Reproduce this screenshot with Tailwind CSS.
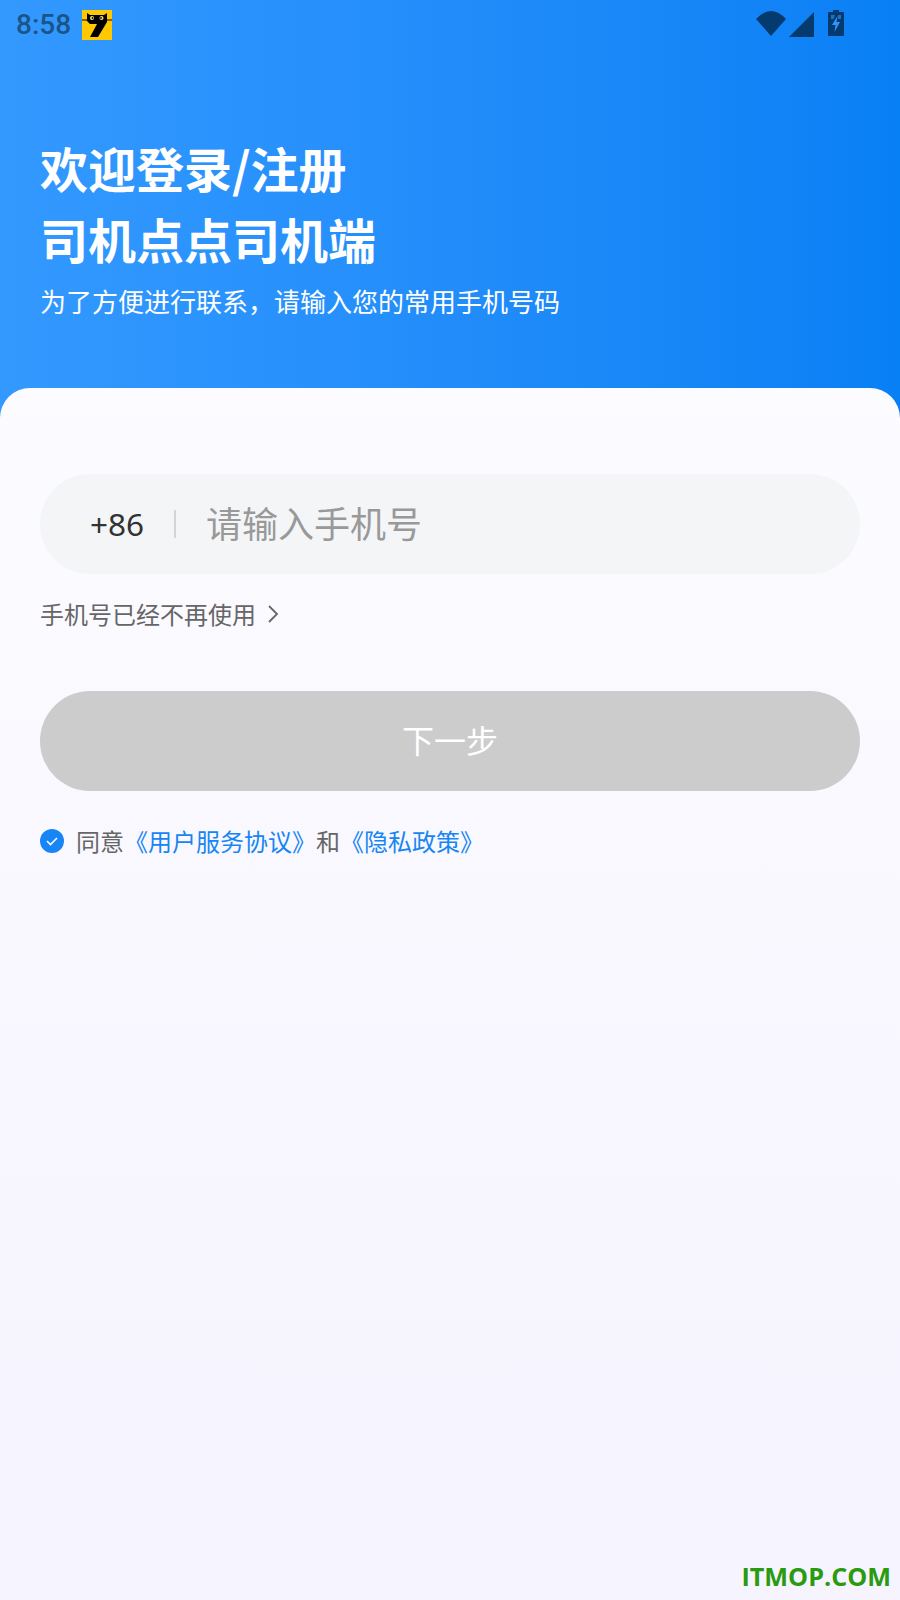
<!DOCTYPE html>
<html lang="zh-CN">

<head>
    <meta charset="UTF-8">
    <meta name="viewport" content="width=device-width, initial-scale=1.0">
    <title>司机点点司机端</title>
    <script src="https://cdn.jsdelivr.net/npm/@tailwindcss/browser@4"></script>
</head>

<body>
    <section class="relative w-[900px] h-[1600px] overflow-hidden flex flex-col bg-[#f5f4ff] font-['Noto_Sans_CJK_SC','Noto_Sans',sans-serif]">
        <!-- header -->
        <div class="h-[418px] shrink-0 bg-gradient-to-r from-[#3399ff] to-[#0880f5]">
            <div class="h-[50px] flex items-center pl-4 pr-[56px] text-[#1a5488]">
                <span class="font-['Roboto',sans-serif] font-medium text-[28px] leading-none">8:58</span>
                <svg class="ml-[11px] w-[30px] h-[30px]" viewBox="0 0 30 30">
                    <rect width="30" height="30" fill="#ffc800" />
                    <path d="M0 10 H30" stroke="#000" stroke-width="1" />
                    <path d="M5 3 L8 5 H22 L25 3 V12 L16 27 H8 L15 14 H8 L5 11 Z" fill="#000" />
                    <circle cx="10" cy="8" r="2" fill="#ffe680" />
                    <circle cx="19.5" cy="8" r="2" fill="#ffe680" />
                    <circle cx="10.5" cy="8" r="0.9" fill="#000" />
                    <circle cx="19" cy="8" r="0.9" fill="#000" />
                </svg>
                <div class="ml-auto flex items-center">
                    <svg class="w-[30px] h-[26px] -mt-[2px]" viewBox="0 0 30 26"><path d="M0 8 Q15 -8 30 8 L15 25 Z" fill="#043a6e" /></svg>
                    <svg class="w-[25px] h-[25px] ml-[3px] -mt-[2px]" viewBox="0 0 25 25"><path d="M0 25 L25 0 V25 Z" fill="#043a6e" /></svg>
                    <svg class="w-[16px] h-[26px] ml-[14px] -mt-[4px]" viewBox="0 0 16 26">
                        <path d="M5 0 H11 V2 H16 V26 H0 V2 H5 Z" fill="#043a6e" />
                        <path d="M3 5 H7 L5.5 9 H3 Z M10 5 H13 V9 H10 Z" fill="#2f95fb" opacity="0.6" />
                        <path d="M9.5 6 L4 15 H7.5 L6.5 22 L12 12 H8.5 Z" fill="#2f95fb" />
                    </svg>
                </div>
            </div>
            <div class="pl-[40px] pt-[82px] text-white">
                <h1 class="text-[48px] leading-[71px] font-bold">欢迎登录/注册</h1>
                <h1 class="text-[48px] leading-[71px] font-bold">司机点点司机端</h1>
                <p class="text-[26px] leading-[36px] mt-[9px]">为了方便进行联系，请输入您的常用手机号码</p>
            </div>
        </div>

        <!-- card -->
        <div class="-mt-[30px] flex-1 relative rounded-t-[30px] bg-gradient-to-b from-[#fcfbff] to-[#f5f4ff] px-[40px] pt-[86px]">
            <div class="h-[100px] rounded-[50px] bg-[#f4f5f7] flex items-center pl-[50px]">
                <span class="font-['Noto_Sans',sans-serif] w-[54px] text-[31.5px] leading-none text-[#333333]">+86</span>
                <span class="w-[2px] h-[28px] bg-[#d4d4d4] ml-[30px]"></span>
                <span class="ml-[30px] -mt-[4px] text-[36px] leading-none text-[#999999]">请输入手机号</span>
            </div>
            <div class="mt-[22px] flex items-center text-[24px] leading-[36px] text-[#666666]">
                手机号已经不再使用
                <svg class="ml-[11px] w-[12px] h-[20px]" viewBox="0 0 12 20" fill="none" stroke="#666666" stroke-width="1.8"><path d="M2 2 L10 10 L2 18" /></svg>
            </div>
            <button class="mt-[59px] w-full h-[100px] pb-[4px] rounded-[50px] bg-[#cccccc] text-white text-[32px]">下一步</button>
            <div class="mt-[32px] flex items-center text-[24px] leading-[36px] text-[#666666]">
                <svg class="w-[24px] h-[24px]" viewBox="0 0 24 24">
                    <circle cx="12" cy="12" r="12" fill="#1785f5" />
                    <path d="M7 12 L10.5 15.5 L17 9" fill="none" stroke="#fff" stroke-width="1.6" />
                </svg>
                <span class="ml-[12px]">同意</span><span class="text-[#1785f5]">《用户服务协议》</span><span>和</span><span class="text-[#1785f5]">《隐私政策》</span>
            </div>
        </div>

        <span class="absolute right-[9px] bottom-[11px] font-['Open_Sans',sans-serif] font-bold text-[25.2px] leading-none text-[#2a9a10]">ITMOP.COM</span>
    </section>
</body>

</html>
